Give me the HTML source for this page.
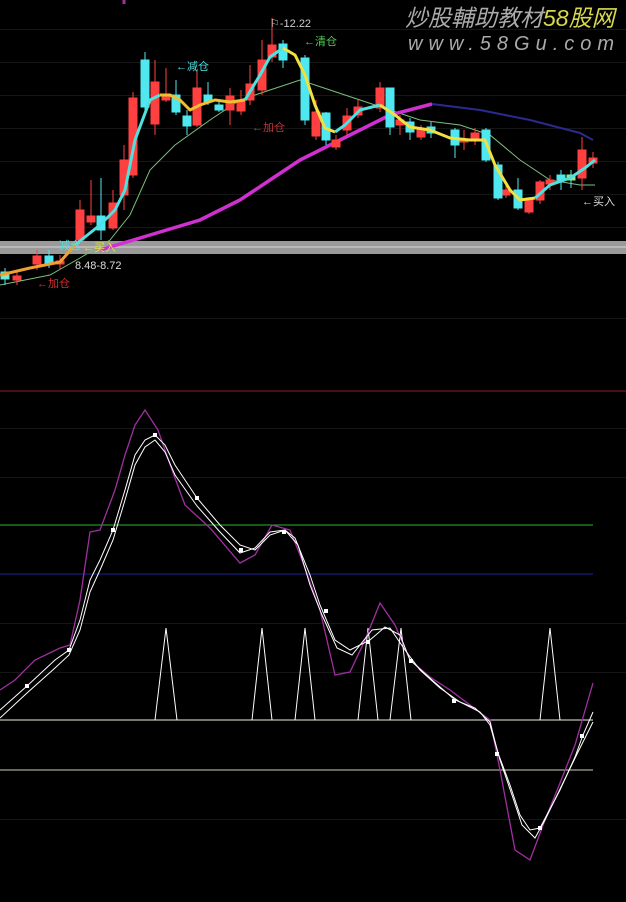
<!DOCTYPE html>
<html><head><meta charset="utf-8"><style>
html,body{margin:0;padding:0;background:#000;width:626px;height:902px;overflow:hidden}
svg{display:block}
text{font-family:"Liberation Sans","Noto Sans CJK SC",sans-serif}
</style></head><body>
<svg width="626" height="902" viewBox="0 0 626 902" xmlns="http://www.w3.org/2000/svg">
<rect width="626" height="902" fill="#000"/>
<g stroke="#161616" stroke-width="1">
<line x1="0" y1="29.5" x2="626" y2="29.5"/><line x1="0" y1="62.5" x2="626" y2="62.5"/>
<line x1="0" y1="95.5" x2="626" y2="95.5"/><line x1="0" y1="128.5" x2="626" y2="128.5"/>
<line x1="0" y1="161.5" x2="626" y2="161.5"/><line x1="0" y1="194.5" x2="626" y2="194.5"/>
<line x1="0" y1="227.5" x2="626" y2="227.5"/><line x1="0" y1="318.5" x2="626" y2="318.5"/>
<line x1="0" y1="428.5" x2="626" y2="428.5"/><line x1="0" y1="477.5" x2="626" y2="477.5"/>
<line x1="0" y1="623.5" x2="626" y2="623.5"/><line x1="0" y1="672.5" x2="626" y2="672.5"/>
<line x1="0" y1="819.5" x2="626" y2="819.5"/>
</g>
<rect x="0" y="241" width="626" height="13" fill="#9a9a9a"/>
<line x1="0" y1="247" x2="626" y2="247" stroke="#b8b8b8" stroke-width="2"/>
<!-- watermark -->
<text x="405" y="26" font-size="23" font-style="italic" fill="#aaa" font-family="Liberation Sans,'Noto Sans CJK SC',sans-serif">炒股輔助教材<tspan fill="#d8d84a">58股网</tspan></text>
<text x="408" y="50" font-size="20" font-style="italic" fill="#aaa" letter-spacing="6" font-family="Liberation Serif,serif">www.58Gu.com</text>
<!-- thin green MA -->
<polyline fill="none" stroke="#7cbf7c" stroke-width="1" points="0,285 50,275 80,258 110,240 130,215 150,170 175,145 210,120 240,100 270,90 300,80 330,90 360,100 390,110 420,120 460,125 490,135 520,160 550,180 580,185 595,185"/>
<!-- magenta / blue long MA -->
<polyline fill="none" stroke="#d030d0" stroke-width="3.5" points="100,250 150,235 200,220 240,200 270,180 300,160 330,145 360,130 390,115 432,104"/>
<polyline fill="none" stroke="#2a2a90" stroke-width="2" points="432,104 480,110 530,120 580,133 593,140"/>
<!-- candles -->
<g stroke-width="1">
<g stroke="#ff4040" fill="#ff4040">
<line x1="17" y1="270" x2="17" y2="285"/><rect x="13" y="276" width="8" height="4"/>
<line x1="37" y1="250" x2="37" y2="270"/><rect x="33" y="256" width="8" height="8"/>
<line x1="60" y1="255" x2="60" y2="270"/><rect x="56" y="261" width="8" height="3"/>
<line x1="80" y1="200" x2="80" y2="245"/><rect x="76" y="210" width="8" height="30"/>
<line x1="91" y1="180" x2="91" y2="225"/><rect x="87" y="216" width="8" height="6"/>
<line x1="113" y1="190" x2="113" y2="230"/><rect x="109" y="203" width="8" height="25"/>
<line x1="124" y1="145" x2="124" y2="210"/><rect x="120" y="160" width="8" height="35"/>
<line x1="133" y1="92" x2="133" y2="178"/><rect x="129" y="98" width="8" height="77"/>
<line x1="155" y1="60" x2="155" y2="135"/><rect x="151" y="82" width="8" height="42"/>
<line x1="166" y1="68" x2="166" y2="102"/><rect x="162" y="95" width="8" height="5"/>
<line x1="197" y1="70" x2="197" y2="127"/><rect x="193" y="88" width="8" height="37"/>
<line x1="230" y1="88" x2="230" y2="125"/><rect x="226" y="96" width="8" height="14"/>
<line x1="241" y1="90" x2="241" y2="115"/><rect x="237" y="100" width="8" height="11"/>
<line x1="250" y1="65" x2="250" y2="105"/><rect x="246" y="84" width="8" height="16"/>
<line x1="262" y1="40" x2="262" y2="95"/><rect x="258" y="60" width="8" height="30"/>
<line x1="272" y1="18" x2="272" y2="62"/><rect x="268" y="45" width="8" height="12"/>
<line x1="316" y1="100" x2="316" y2="140"/><rect x="312" y="112" width="8" height="24"/>
<line x1="336" y1="135" x2="336" y2="150"/><rect x="332" y="140" width="8" height="7"/>
<line x1="347" y1="108" x2="347" y2="135"/><rect x="343" y="116" width="8" height="14"/>
<line x1="358" y1="100" x2="358" y2="118"/><rect x="354" y="107" width="8" height="8"/>
<line x1="380" y1="82" x2="380" y2="112"/><rect x="376" y="88" width="8" height="20"/>
<line x1="400" y1="115" x2="400" y2="135"/><rect x="396" y="120" width="8" height="5"/>
<line x1="421" y1="125" x2="421" y2="140"/><rect x="417" y="130" width="8" height="7"/>
<line x1="464" y1="130" x2="464" y2="150"/><rect x="460" y="140" width="8" height="2"/>
<line x1="475" y1="128" x2="475" y2="145"/><rect x="471" y="133" width="8" height="5"/>
<line x1="506" y1="185" x2="506" y2="198"/><rect x="502" y="190" width="8" height="5"/>
<line x1="529" y1="198" x2="529" y2="214"/><rect x="525" y="200" width="8" height="12"/>
<line x1="540" y1="180" x2="540" y2="204"/><rect x="536" y="182" width="8" height="18"/>
<line x1="550" y1="175" x2="550" y2="190"/><rect x="546" y="180" width="8" height="4"/>
<line x1="582" y1="137" x2="582" y2="190"/><rect x="578" y="150" width="8" height="28"/>
<line x1="593" y1="152" x2="593" y2="168"/><rect x="589" y="158" width="8" height="5"/>
</g>
<g stroke="#50e8f0" fill="#50e8f0">
<line x1="5" y1="268" x2="5" y2="285"/><rect x="1" y="272" width="8" height="7" fill="#80e8c0"/>
<line x1="49" y1="250" x2="49" y2="268"/><rect x="45" y="256" width="8" height="8"/>
<line x1="101" y1="178" x2="101" y2="240"/><rect x="97" y="216" width="8" height="14"/>
<line x1="145" y1="52" x2="145" y2="110"/><rect x="141" y="60" width="8" height="47"/>
<line x1="176" y1="80" x2="176" y2="115"/><rect x="172" y="95" width="8" height="17"/>
<line x1="187" y1="110" x2="187" y2="135"/><rect x="183" y="116" width="8" height="10"/>
<line x1="208" y1="82" x2="208" y2="105"/><rect x="204" y="95" width="8" height="7"/>
<line x1="219" y1="100" x2="219" y2="112"/><rect x="215" y="105" width="8" height="5"/>
<line x1="283" y1="40" x2="283" y2="68"/><rect x="279" y="44" width="8" height="16"/>
<line x1="305" y1="55" x2="305" y2="125"/><rect x="301" y="58" width="8" height="62"/>
<line x1="326" y1="112" x2="326" y2="145"/><rect x="322" y="113" width="8" height="27"/>
<line x1="390" y1="88" x2="390" y2="135"/><rect x="386" y="88" width="8" height="39"/>
<line x1="410" y1="118" x2="410" y2="140"/><rect x="406" y="122" width="8" height="10"/>
<line x1="431" y1="122" x2="431" y2="138"/><rect x="427" y="127" width="8" height="6"/>
<line x1="455" y1="128" x2="455" y2="158"/><rect x="451" y="130" width="8" height="15"/>
<line x1="486" y1="128" x2="486" y2="162"/><rect x="482" y="130" width="8" height="30"/>
<line x1="498" y1="162" x2="498" y2="200"/><rect x="494" y="165" width="8" height="33"/>
<line x1="518" y1="178" x2="518" y2="210"/><rect x="514" y="190" width="8" height="18"/>
<line x1="561" y1="170" x2="561" y2="190"/><rect x="557" y="175" width="8" height="5"/>
<line x1="571" y1="170" x2="571" y2="188"/><rect x="567" y="175" width="8" height="5" fill="#90e890" stroke="#90e890"/>
</g>
</g>
<!-- MA5 thick colored -->
<g fill="none" stroke-width="3" stroke-linejoin="round">
<polyline stroke="#f0a030" points="0,275 30,268 60,262 75,245"/>
<polyline stroke="#50e0e0" points="75,245 100,225 115,210 125,190 135,140 150,100 160,95"/>
<polyline stroke="#f0c030" points="160,95 170,95 180,100 190,110 200,105 215,100 230,102 245,100"/>
<polyline stroke="#50e0e0" points="245,100 260,75 270,57 283,48"/>
<polyline stroke="#f0e040" points="283,48 295,55 305,75 315,105 325,128 335,132"/>
<polyline stroke="#50e0e0" points="335,132 345,125 360,110 380,105"/>
<polyline stroke="#f0e040" points="380,105 395,115 410,127 430,130 450,138 470,140 485,140 495,165 510,190 520,200 535,198"/>
<polyline stroke="#50e0e0" points="535,198 550,185 570,178 585,168 595,160"/>
</g>
<!-- labels -->
<g font-size="11">
<text x="270" y="27" fill="#ccc">⚐-12.22</text>
<text x="304" y="45" fill="#50d050">←清仓</text>
<text x="176" y="70" fill="#50e0e0">←减仓</text>
<text x="252" y="131" fill="#d03030">←加仓</text>
<text x="48" y="249" fill="#50e0e0">←减仓</text>
<text x="83" y="251" fill="#e0e040">←买入</text>
<text x="75" y="269" fill="#ddd">8.48-8.72</text>
<text x="37" y="287" fill="#d03030">←加仓</text>
<text x="582" y="205" fill="#ddd">←买入</text>
</g>
<!-- bottom panel -->
<line x1="0" y1="391" x2="626" y2="391" stroke="#902020"/>
<line x1="0" y1="525" x2="593" y2="525" stroke="#30b030"/>
<line x1="0" y1="574" x2="593" y2="574" stroke="#2020a0"/>
<line x1="0" y1="720" x2="593" y2="720" stroke="#f0f0e0"/>
<line x1="0" y1="770" x2="593" y2="770" stroke="#d0d0c0"/>
<g fill="none" stroke="#fff" stroke-width="1">
<polyline points="155,720 166,628 177,720"/>
<polyline points="252,720 262,628 272,720"/>
<polyline points="295,720 305,628 315,720"/>
<polyline points="358,720 368,628 378,720"/>
<polyline points="390,720 401,628 411,720"/>
<polyline points="540,720 550,628 560,720"/>
</g>
<polyline fill="none" stroke="#a030a0" stroke-width="1.3" points="0,690 15,680 35,660 60,648 70,645 80,600 90,532 100,530 115,490 125,455 135,425 145,410 158,430 172,470 185,505 210,528 240,563 255,555 272,525 290,530 302,560 320,610 335,675 350,672 365,640 380,603 395,625 410,660 430,677 450,690 470,705 490,720 500,770 515,850 530,860 545,820 560,783 575,745 593,683"/>
<polyline fill="none" stroke="#fff" stroke-width="1" points="0,710 27,686 55,660 69,650 80,620 90,580 100,560 113,530 125,490 135,455 145,440 155,435 165,445 175,465 197,498 220,525 240,545 255,550 270,535 285,530 295,538 310,575 320,605 335,640 350,650 370,640 385,627 400,635 410,660 432,680 455,700 475,708 490,722 498,753 510,785 520,815 530,830 540,828 560,790 575,757 583,735 593,712"/>
<polyline fill="none" stroke="#fff" stroke-width="1" points="0,718 27,693 55,668 69,655 80,630 90,592 100,570 113,540 125,500 135,465 145,447 155,440 165,452 175,475 197,506 220,532 240,553 255,548 270,532 285,530 298,545 310,585 322,615 337,648 352,655 372,630 390,628 405,650 420,670 440,688 460,702 480,712 490,725 500,760 512,795 522,825 535,838 545,820 562,785 578,752 593,722"/>
<g fill="#fff">
<rect x="25" y="684" width="4" height="4"/><rect x="67" y="648" width="4" height="4"/>
<rect x="111" y="528" width="4" height="4"/><rect x="153" y="433" width="4" height="4"/>
<rect x="195" y="496" width="4" height="4"/><rect x="239" y="548" width="4" height="4"/>
<rect x="282" y="530" width="4" height="4"/><rect x="324" y="609" width="4" height="4"/>
<rect x="366" y="640" width="4" height="4"/><rect x="409" y="659" width="4" height="4"/>
<rect x="452" y="699" width="4" height="4"/><rect x="495" y="752" width="4" height="4"/>
<rect x="538" y="826" width="4" height="4"/><rect x="580" y="734" width="4" height="4"/>
</g>
<line x1="124" y1="0" x2="124" y2="4" stroke="#a030a0" stroke-width="3"/>
</svg>
</body></html>
